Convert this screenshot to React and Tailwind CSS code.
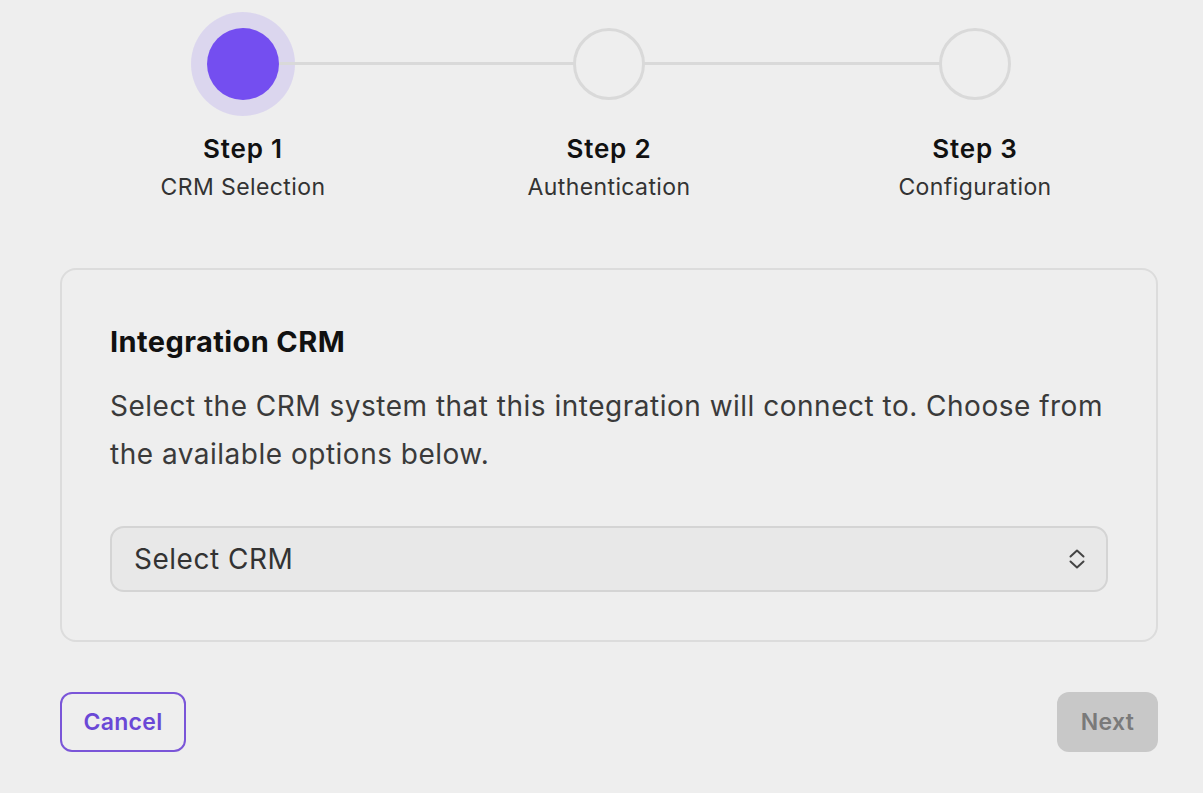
import { useState } from "react";

const steps = [
  { title: "Step 1", subtitle: "CRM Selection" },
  { title: "Step 2", subtitle: "Authentication" },
  { title: "Step 3", subtitle: "Configuration" },
];

function StepCircle({ active }) {
  // halo stays non-positioned so the connector line paints over it, the dot sits on top
  return (
    <div
      className={`w-[104px] h-[104px] rounded-full flex items-center justify-center ${
        active ? "bg-[#744ef0]/15" : ""
      }`}
    >
      {active ? (
        <div className="relative z-10 w-[72px] h-[72px] rounded-full bg-[#744ef0]" />
      ) : (
        <div className="relative z-10 w-[72px] h-[72px] rounded-full border-[3px] border-[#d9d9d9] bg-[#eeeeee]" />
      )}
    </div>
  );
}

export default function App() {
  const [current] = useState(0);

  return (
    <div
      className="min-h-screen bg-[#eeeeee] pl-[60px] pr-[45px] pt-3"
      style={{ fontFamily: "Inter, 'Noto Sans', sans-serif" }}
    >
      {/* stepper */}
      <div className="relative grid grid-cols-3">
        <div className="absolute top-[50px] left-[16.667%] right-[16.667%] h-[3px] bg-[#d9d9d9]" />
        {steps.map((step, i) => (
          <div key={step.title} className="flex flex-col items-center">
            <StepCircle active={i === current} />
            <div className="mt-[18px] text-[26px] leading-[30px] font-semibold tracking-[0.8px] text-[#111]">
              {step.title}
            </div>
            <div className="mt-[9px] text-[23px] leading-[28px] tracking-[0.4px] text-[#333]">
              {step.subtitle}
            </div>
          </div>
        ))}
      </div>

      {/* card */}
      <div className="mt-[67px] border-2 border-[#dcdcdc] rounded-2xl px-12 pt-[54px] pb-12">
        <h2 className="text-[29px] leading-[36px] font-bold tracking-[0.4px] text-[#111]">
          Integration CRM
        </h2>
        <p className="mt-[22px] text-[28px] leading-[48px] tracking-[0.5px] text-[#3a3a3a]">
          Select the CRM system that this integration will connect to. Choose from
          the available options below.
        </p>
        <button className="mt-12 w-full h-[66px] rounded-[14px] border-2 border-[#d4d4d4] bg-[#e8e8e8] flex items-center justify-between pl-[22px] pr-[20px]">
          <span className="text-[28px] tracking-[0.5px] text-[#333]">Select CRM</span>
          <svg width="18" height="24" viewBox="0 0 18 24" fill="none" stroke="#444" strokeWidth="2" strokeLinecap="round" strokeLinejoin="round">
            <path d="M2.5 9.5L9 3.5l6.5 6" />
            <path d="M2.5 14.5L9 20.5l6.5-6" />
          </svg>
        </button>
      </div>

      {/* actions */}
      <div className="mt-[50px] flex justify-between">
        <button className="h-[60px] w-[126px] rounded-xl border-2 border-[#7a55d8] text-[23px] font-semibold tracking-[0.3px] text-[#6a48d6]">
          Cancel
        </button>
        <button className="h-[60px] w-[101px] rounded-xl bg-[#c8c8c8] text-[23px] font-semibold tracking-[0.3px] text-[#7a7a7a]">
          Next
        </button>
      </div>
    </div>
  );
}
